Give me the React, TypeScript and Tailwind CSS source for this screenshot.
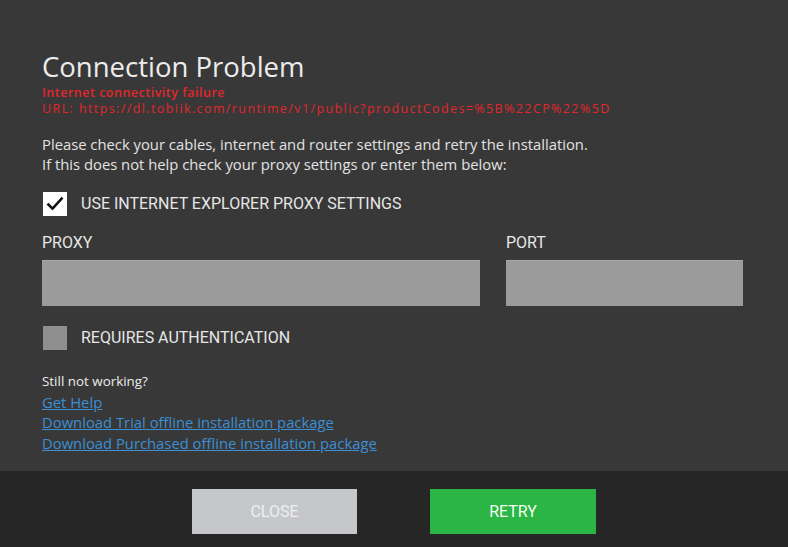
import * as React from "react";

const body = { fontFamily: '"Open Sans", "Noto Sans", sans-serif' };
const cond = { fontFamily: 'Roboto, "Liberation Sans", sans-serif' };

function Check({ checked }: { checked: boolean }) {
  if (!checked) {
    return <div className="h-6 w-6 shrink-0 bg-[#8f8f8f]" />;
  }
  return (
    <div className="flex h-6 w-6 shrink-0 items-center justify-center bg-white">
      <svg viewBox="0 0 24 24" className="h-5 w-5" fill="none" stroke="#111" strokeWidth={3} strokeLinecap="square">
        <path d="M4 12.5l5 5L20 5.5" />
      </svg>
    </div>
  );
}

export default function App() {
  return (
    <div className="flex h-[547px] w-[788px] flex-col bg-[#383838] text-[#e6e6e6]" style={body}>
      <div className="flex-1 pl-[42px] pt-[49px]">
        <h1 className="text-[27.5px] leading-[36px] text-[#ececec]">Connection Problem</h1>
        <div className="text-[12.5px] font-semibold leading-[16px] text-[#e2262b]">
          <p className="tracking-[0.5px]">Internet connectivity failure</p>
          <p className="font-medium tracking-[1.4px]">URL: https://dl.tobiik.com/runtime/v1/public?productCodes=%5B%22CP%22%5D</p>
        </div>
        <div className="mt-[17px] text-[14.8px] leading-[20px] text-[#e2e2e2]">
          <p>Please check your cables, internet and router settings and retry the installation.</p>
          <p>If this does not help check your proxy settings or enter them below:</p>
        </div>
        <div className="mt-[18px] flex items-center gap-[14px]" style={cond}>
          <div className="ml-px">
            <Check checked />
          </div>
          <span className="text-[16px] text-[#e6e6e6]">USE INTERNET EXPLORER PROXY SETTINGS</span>
        </div>
        <div className="mt-[17px] flex gap-[26px]" style={cond}>
          <div className="w-[438px]">
            <div className="h-[20px] text-[16px] leading-[20px]">PROXY</div>
            <div className="mt-[7px] h-[46px] border-t border-[#a8a8a8] bg-[#9b9b9b]" />
          </div>
          <div className="w-[237px]">
            <div className="h-[20px] text-[16px] leading-[20px]">PORT</div>
            <div className="mt-[7px] h-[46px] border-t border-[#a8a8a8] bg-[#9b9b9b]" />
          </div>
        </div>
        <div className="mt-[20px] flex items-center gap-[14px]" style={cond}>
          <div className="ml-px">
            <Check checked={false} />
          </div>
          <span className="text-[16px] text-[#e6e6e6]">REQUIRES AUTHENTICATION</span>
        </div>
        <div className="mt-[21px] text-[14.8px] leading-[20.5px]">
          <p className="text-[13.4px] text-[#ececec]">Still not working?</p>
          <a href="#" className="block text-[#3b8fd4] underline">Get Help</a>
          <a href="#" className="block text-[#3b8fd4] underline">Download Trial offline installation package</a>
          <a href="#" className="block text-[#3b8fd4] underline">Download Purchased offline installation package</a>
        </div>
      </div>
      <div className="flex h-[76px] shrink-0 justify-center gap-[73px] bg-[#262626] pt-[18px]" style={cond}>
        <button className="h-[45px] w-[165px] bg-[#c5c7cb] text-[16px] text-[#eef0f2]">CLOSE</button>
        <button className="h-[45px] w-[166px] bg-[#2bb545] text-[16px] text-[#f4fff4]">RETRY</button>
      </div>
    </div>
  );
}
